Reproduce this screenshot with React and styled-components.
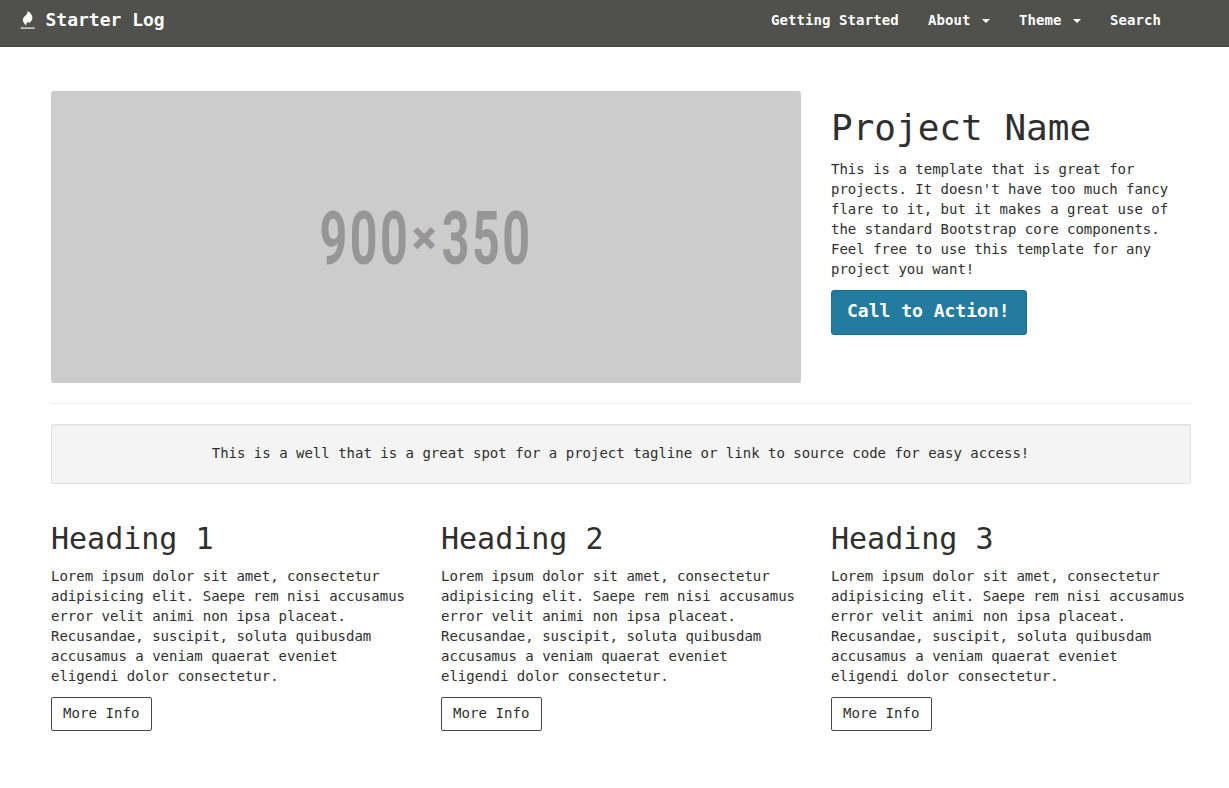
import React from 'react';
import styled, { createGlobalStyle } from 'styled-components';

const GlobalStyle = createGlobalStyle`
  *, *::before, *::after { box-sizing: border-box; }
  body {
    margin: 0;
    background: #fff;
    color: #2f2f2f;
    font: 14px/20px "DejaVu Sans Mono", monospace;
  }
  h1, h2, p { margin: 0; font-weight: 400; }
  a { color: inherit; text-decoration: none; }
`;

const Navbar = styled.nav`
  display: flex;
  justify-content: space-between;
  height: 47px;
  padding: 10px 68px 0 20px;
  background: #50504d;
  border-bottom: 1px solid #41413f;
  color: #fff;
  font-weight: 700;
`;

const Brand = styled.a`
  display: flex;
  align-items: flex-start;
  gap: 9.5px;
  font-size: 18px;
`;

const FlameIcon = styled.svg`
  display: block;
  width: 16px;
  height: 19px;
`;

const Menu = styled.div`
  display: flex;
  gap: 29.4px;
  letter-spacing: 0.08px;
`;

const MenuLink = styled.a`
  display: flex;
  align-items: flex-start;
`;

const Caret = styled.span`
  margin: 9px 0 0 11px;
  border: 4px solid transparent;
  border-top-color: #fff;
  border-bottom: 0;
`;

const Container = styled.main`
  width: 1140px;
  margin: 44px 0 0 51px;
`;

const Hero = styled.section`
  display: grid;
  grid-template-columns: 750px 360px;
  gap: 30px;
`;

const Placeholder = styled.svg`
  display: block;
  width: 750px;
  height: 292px;
  border-radius: 3px;
  background: #ccc;
`;

const Title = styled.h1`
  margin: 17px 0 11px;
  font-size: 36px;
  line-height: 40px;
`;

const Text = styled.p`
  margin-bottom: 11px;
  white-space: pre-line;
`;

const Button = styled.a`
  display: inline-block;
  width: ${({ $primary }) => ($primary ? '196px' : '101px')};
  height: ${({ $primary }) => ($primary ? '45px' : '34px')};
  padding: ${({ $primary }) => ($primary ? '9px 15px' : '5px 11px')};
  border: 1px solid ${({ $primary }) => ($primary ? '#1d6b8c' : '#474949')};
  border-radius: ${({ $primary }) => ($primary ? '3px' : '2px')};
  background: ${({ $primary }) => ($primary ? '#247ba0' : '#fff')};
  color: ${({ $primary }) => ($primary ? '#fff' : 'inherit')};
  font-size: ${({ $primary }) => ($primary ? '18px' : '14px')};
  font-weight: ${({ $primary }) => ($primary ? 700 : 400)};
  line-height: ${({ $primary }) => ($primary ? '22px' : '20px')};
  letter-spacing: ${({ $primary }) => ($primary ? '0' : '0.08px')};
`;

const Divider = styled.hr`
  height: 1px;
  margin: 20px 0;
  border: 0;
  background: #ececec;
`;

const Well = styled.div`
  height: 60px;
  padding: 18px 1px 0 0;
  border: 1px solid #e1e1e1;
  border-radius: 2px;
  background: #f4f4f4;
  box-shadow: inset 0 1px 1px rgba(0, 0, 0, 0.05);
  text-align: center;
`;

const Columns = styled.section`
  display: grid;
  grid-template-columns: repeat(3, 360px);
  gap: 30px;
  margin-top: 38px;
`;

const Heading = styled.h2`
  margin-bottom: 11px;
  font-size: 30px;
  line-height: 33px;
`;

const menu = [
  { label: 'Getting Started' },
  { label: 'About', caret: true },
  { label: 'Theme', caret: true },
  { label: 'Search' },
];

const intro =
  "This is a template that is great for\nprojects. It doesn't have too much fancy\nflare to it, but it makes a great use of\nthe standard Bootstrap core components.\nFeel free to use this template for any\nproject you want!";

const lorem =
  'Lorem ipsum dolor sit amet, consectetur adipisicing elit. Saepe rem nisi accusamus error velit animi non ipsa placeat. Recusandae, suscipit, soluta quibusdam accusamus a veniam quaerat eveniet eligendi dolor consectetur.';

export default function App() {
  return (
    <>
      <GlobalStyle />
      <Navbar>
        <Brand href="#">
          <FlameIcon viewBox="0 0 16 19">
            <path
              fill="#fff"
              d="M7.400 1C8 3.200 6.500 4.600 5 6C3.600 7.400 2.600 8.700 2.900 10.600C3.200 12.700 4.600 14.200 6.400 15.700C6.100 14.400 6.300 13.400 7.100 12.700C7.800 12.100 8.200 11.700 8.400 11.200C8.800 12 8.800 12.700 8.500 13.500C10.800 12.200 12.400 10.300 12.400 7.800C12.400 4.800 10.400 2.700 7.400 1z"
            />
            <rect x="0.700" y="17.300" width="14" height="1.700" fill="#c4c4c3" />
          </FlameIcon>
          Starter Log
        </Brand>
        <Menu>
          {menu.map(({ label, caret }) => (
            <MenuLink href="#" key={label}>
              {label}
              {caret && <Caret />}
            </MenuLink>
          ))}
        </Menu>
      </Navbar>
      <Container>
        <Hero>
          <Placeholder viewBox="0 0 750 292">
            <g fill="#969696" fontFamily="Roboto, sans-serif" fontWeight="700" fontSize="74.500">
              <text transform="translate(268.500 172.700) scale(.65 1)" letterSpacing="3.800">900</text>
              <text
                transform="translate(361.300 161.500)"
                fontSize="45"
                stroke="#969696"
                strokeWidth="0.800"
              >
                ×
              </text>
              <text transform="translate(390.800 172.700) scale(.65 1)" letterSpacing="3.800">350</text>
            </g>
          </Placeholder>
          <div>
            <Title>Project Name</Title>
            <Text>{intro}</Text>
            <Button href="#" $primary>Call to Action!</Button>
          </div>
        </Hero>
        <Divider />
        <Well>This is a well that is a great spot for a project tagline or link to source code for easy access!</Well>
        <Columns>
          {[1, 2, 3].map((n) => (
            <article key={n}>
              <Heading>Heading {n}</Heading>
              <Text>{lorem}</Text>
              <Button href="#">More Info</Button>
            </article>
          ))}
        </Columns>
      </Container>
    </>
  );
}
